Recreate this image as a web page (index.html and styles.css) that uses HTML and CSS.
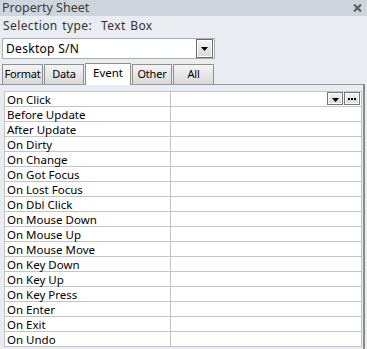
FILE: index.html
```html
<!DOCTYPE html>
<html lang="en">
<head>
    <meta charset="UTF-8">
    <title>Property Sheet</title>
    <link rel="stylesheet" href="styles.css">
</head>
<body>
    <div class="sheet">
        <div class="titlebar">
            <span class="title">Property Sheet</span>
            <svg class="close" width="9" height="8" viewBox="0 0 9 8">
                <path d="M1 0.5 L8 7.5 M8 0.5 L1 7.5" stroke="#5a5a5a" stroke-width="2"/>
            </svg>
        </div>

        <div class="selection">Selection type:&nbsp; Text Box</div>

        <div class="combo">
            <span class="combo-text">Desktop S/N</span>
            <span class="combo-btn">
                <svg width="7" height="4" viewBox="0 0 7 4"><path d="M0 0 H7 L3.5 4 Z" fill="#000"/></svg>
            </span>
        </div>

        <div class="tabs">
            <div class="tab">Format</div>
            <div class="tab">Data</div>
            <div class="tab active">Event</div>
            <div class="tab">Other</div>
            <div class="tab">All</div>
        </div>

        <div class="tab-body">
            <table class="grid">
                <tr>
                    <td class="name">On Click</td>
                    <td class="value">
                        <div class="cell-btns">
                            <span class="mini-btn">
                                <svg width="7" height="4" viewBox="0 0 7 4"><path d="M0 0 H7 L3.5 4 Z" fill="#000"/></svg>
                            </span>
                            <span class="mini-btn dots">
                                <svg width="8" height="2" viewBox="0 0 8 2"><path d="M0 0h2v2H0zM3 0h2v2H3zM6 0h2v2H6z" fill="#000"/></svg>
                            </span>
                        </div>
                    </td>
                </tr>
                <tr><td class="name">Before Update</td><td class="value"></td></tr>
                <tr><td class="name">After Update</td><td class="value"></td></tr>
                <tr><td class="name">On Dirty</td><td class="value"></td></tr>
                <tr><td class="name">On Change</td><td class="value"></td></tr>
                <tr><td class="name">On Got Focus</td><td class="value"></td></tr>
                <tr><td class="name">On Lost Focus</td><td class="value"></td></tr>
                <tr><td class="name">On Dbl Click</td><td class="value"></td></tr>
                <tr><td class="name">On Mouse Down</td><td class="value"></td></tr>
                <tr><td class="name">On Mouse Up</td><td class="value"></td></tr>
                <tr><td class="name">On Mouse Move</td><td class="value"></td></tr>
                <tr><td class="name">On Key Down</td><td class="value"></td></tr>
                <tr><td class="name">On Key Up</td><td class="value"></td></tr>
                <tr><td class="name">On Key Press</td><td class="value"></td></tr>
                <tr><td class="name">On Enter</td><td class="value"></td></tr>
                <tr><td class="name">On Exit</td><td class="value"></td></tr>
                <tr><td class="name">On Undo</td><td class="value"></td></tr>
            </table>
        </div>
    </div>
</body>
</html>
```

FILE: styles.css
```css
* {
    box-sizing: border-box;
    margin: 0;
    padding: 0;
}

body {
    background-color: #e9ecf0;
    font-family: "Noto Sans", "Open Sans", sans-serif;
    font-size: 12px;
    overflow: hidden;
}

.sheet {
    width: 367px;
    height: 349px;
}

.titlebar {
    display: flex;
    align-items: center;
    justify-content: space-between;
    height: 16px;
    padding: 0 5px 0 2px;
    background-color: #cfd5dc;
}

.title {
    font-size: 12.5px;
    color: #3c3c3c;
    line-height: 16px;
}

.selection {
    height: 22px;
    padding: 2px 3px 0;
    color: #333;
    line-height: 16px;
    letter-spacing: 0.4px;
    word-spacing: 1px;
}

.combo {
    display: flex;
    align-items: center;
    justify-content: space-between;
    width: 213px;
    height: 21px;
    margin-left: 2px;
    padding: 0 1px 0 3px;
    background: white;
    border: 1px solid #abadb3;
}

.combo-text {
    color: #000;
    letter-spacing: 0.3px;
}

.combo-btn {
    display: flex;
    align-items: center;
    justify-content: center;
    width: 17px;
    height: 19px;
    border: 1px solid #6b6b6b;
    box-shadow: inset 0 0 0 1px #fff;
    background: linear-gradient(#f4f4f4, #d9d9d9);
}

.tabs {
    display: flex;
    align-items: flex-end;
    height: 25px;
    padding-left: 2px;
}

.tab {
    height: 20px;
    margin-right: 1px;
    border: 1px solid #8e8f8f;
    border-bottom: none;
    background: linear-gradient(#f5f5f5, #d8d8d8);
    text-align: center;
    font-size: 11px;
    letter-spacing: -0.2px;
    line-height: 18px;
    color: #000;
}

.tab:nth-child(1) { width: 41px; }
.tab:nth-child(2) { width: 40px; }
.tab:nth-child(3) { width: 46px; }
.tab:nth-child(4) { width: 40px; }
.tab:nth-child(5) { width: 41px; }

.tab.active {
    height: 22px;
    margin-bottom: -1px;
    background: #fff;
    font-size: 11.5px;
    letter-spacing: 0;
    line-height: 17px;
    position: relative;
}

.tab-body {
    width: 365px;
    height: 265px;
    padding: 6px 0 0 4px;
    border-top: 1px solid #989898;
    border-right: 2px solid #8a8a8a;
}

.grid {
    border-collapse: collapse;
    width: 358px;
    background: white;
}

.grid td {
    height: 15px;
    border: 1px solid #c4c4c4;
    font-size: 11.5px;
    line-height: 13px;
    padding: 0;
}

.name {
    width: 166px;
    padding-left: 2px !important;
    color: #000;
}

.value {
    position: relative;
}

.cell-btns {
    position: absolute;
    right: 1px;
    top: 0;
    display: flex;
    gap: 1px;
}

.mini-btn {
    display: flex;
    align-items: flex-end;
    justify-content: center;
    width: 16px;
    height: 13px;
    padding-bottom: 2px;
    border: 1px solid #777;
    box-shadow: inset 0 0 0 1px #fff;
    background: linear-gradient(#f2f2f2, #d6d6d6);
}

.mini-btn.dots {
    align-items: center;
    padding-bottom: 0;
}
```
